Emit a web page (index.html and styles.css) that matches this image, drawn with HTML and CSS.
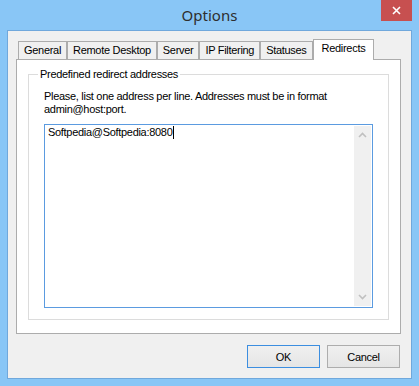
FILE: index.html
```html
<!DOCTYPE html>
<html lang="en">
<head>
    <meta charset="UTF-8">
    <title>Options</title>
    <link rel="stylesheet" href="styles.css">
</head>

<body>
    <div class="window">
        <div class="titlebar">
            <span class="title">Options</span>
            <button class="close" aria-label="Close">
                <svg width="9" height="9" viewBox="0 0 9 9">
                    <path d="M1 1 L8 8 M8 1 L1 8" stroke="#fff" stroke-width="1.6" fill="none"/>
                </svg>
            </button>
        </div>

        <div class="client">
            <div class="tabs">
                <div class="tab">General</div>
                <div class="tab">Remote Desktop</div>
                <div class="tab">Server</div>
                <div class="tab">IP Filtering</div>
                <div class="tab">Statuses</div>
                <div class="tab active">Redirects</div>
            </div>

            <div class="panel">
                <fieldset class="group">
                    <legend>Predefined redirect addresses</legend>
                    <p class="hint">Please, list one address per line. Addresses must be in format admin@host:port.</p>

                    <div class="editbox">
                        <div class="editbox-text">Softpedia@Softpedia:8080<span class="caret"></span></div>
                        <div class="vscroll">
                            <svg width="9" height="6" viewBox="0 0 9 6">
                                <path d="M1 5 L4.5 1.5 L8 5" stroke="#c0c0c0" stroke-width="1.6" fill="none"/>
                            </svg>
                            <svg width="9" height="6" viewBox="0 0 9 6">
                                <path d="M1 1 L4.5 4.5 L8 1" stroke="#c0c0c0" stroke-width="1.6" fill="none"/>
                            </svg>
                        </div>
                    </div>
                </fieldset>
            </div>

            <div class="buttons">
                <button class="btn default">OK</button>
                <button class="btn">Cancel</button>
            </div>
        </div>
    </div>
</body>

</html>
```

FILE: styles.css
```css
body {
    margin: 0;
    font-family: "Liberation Sans", Arial, sans-serif;
    font-size: 11px;
    letter-spacing: -0.3px;
    color: #000;
}

.window {
    width: 419px;
    height: 386px;
    box-sizing: border-box;
    background-color: #89c6f6;
    display: flex;
    flex-direction: column;
}

.titlebar {
    position: relative;
    height: 30px;
    line-height: 30px;
    text-align: center;
}

.title {
    font-family: "Noto Sans", sans-serif;
    font-size: 15px;
    letter-spacing: 0;
    color: #2e2e2e;
}

.close {
    position: absolute;
    top: 0;
    right: 7px;
    width: 31px;
    height: 21px;
    padding: 0;
    border: none;
    background-color: #c75050;
    display: flex;
    align-items: center;
    justify-content: center;
}

.client {
    margin: 0 7px 7px 7px;
    flex: 1;
    border: 1px solid #70a8dc;
    background-color: #f0f0f0;
    padding: 8px 10px 10px 8px;
}

.tabs {
    display: flex;
    align-items: flex-end;
    padding-left: 2px;
    height: 20px;
}

.tab {
    height: 17px;
    line-height: 17px;
    padding: 0 5px;
    border: 1px solid #acacac;
    border-bottom: none;
    background-color: #f0f0f0;
    white-space: nowrap;
}

.tab.active {
    height: 20px;
    line-height: 17px;
    margin-bottom: -1px;
    padding: 0 8px;
    background-color: #fff;
    position: relative;
    z-index: 1;
}

.panel {
    border: 1px solid #acacac;
    background-color: #fff;
    padding: 8px 11px 13px 11px;
}

.group {
    margin: 0;
    border: 1px solid #dcdcdc;
    padding: 9px 15px 11px 15px;
    line-height: 13px;
}

.group legend {
    margin-left: -6px;
    padding: 0 2px;
    line-height: 13px;
}

.hint {
    margin: 0 0 8px 0;
}

.editbox {
    height: 184px;
    box-sizing: border-box;
    border: 1px solid #5b9be0;
    display: flex;
    padding: 1px;
}

.editbox-text {
    flex: 1;
    padding: 0 2px;
    line-height: 13px;
}

.caret {
    display: inline-block;
    width: 1px;
    height: 13px;
    margin-left: 1px;
    vertical-align: -3px;
    background-color: #000;
}

.vscroll {
    width: 17px;
    background-color: #f0f0f0;
    display: flex;
    flex-direction: column;
    justify-content: space-between;
    align-items: center;
    padding: 6px 0 6px 0;
}

.buttons {
    display: flex;
    justify-content: flex-end;
    gap: 7px;
    margin-top: 11px;
    padding-right: 1px;
}

.btn {
    width: 73px;
    height: 23px;
    padding: 0;
    border: 1px solid #adadad;
    background: linear-gradient(#f0f0f0, #e5e5e5);
    font-family: "Liberation Sans", Arial, sans-serif;
    font-size: 11px;
    letter-spacing: -0.3px;
    color: #000;
}

.btn.default {
    border-color: #3c8ee0;
}
```
